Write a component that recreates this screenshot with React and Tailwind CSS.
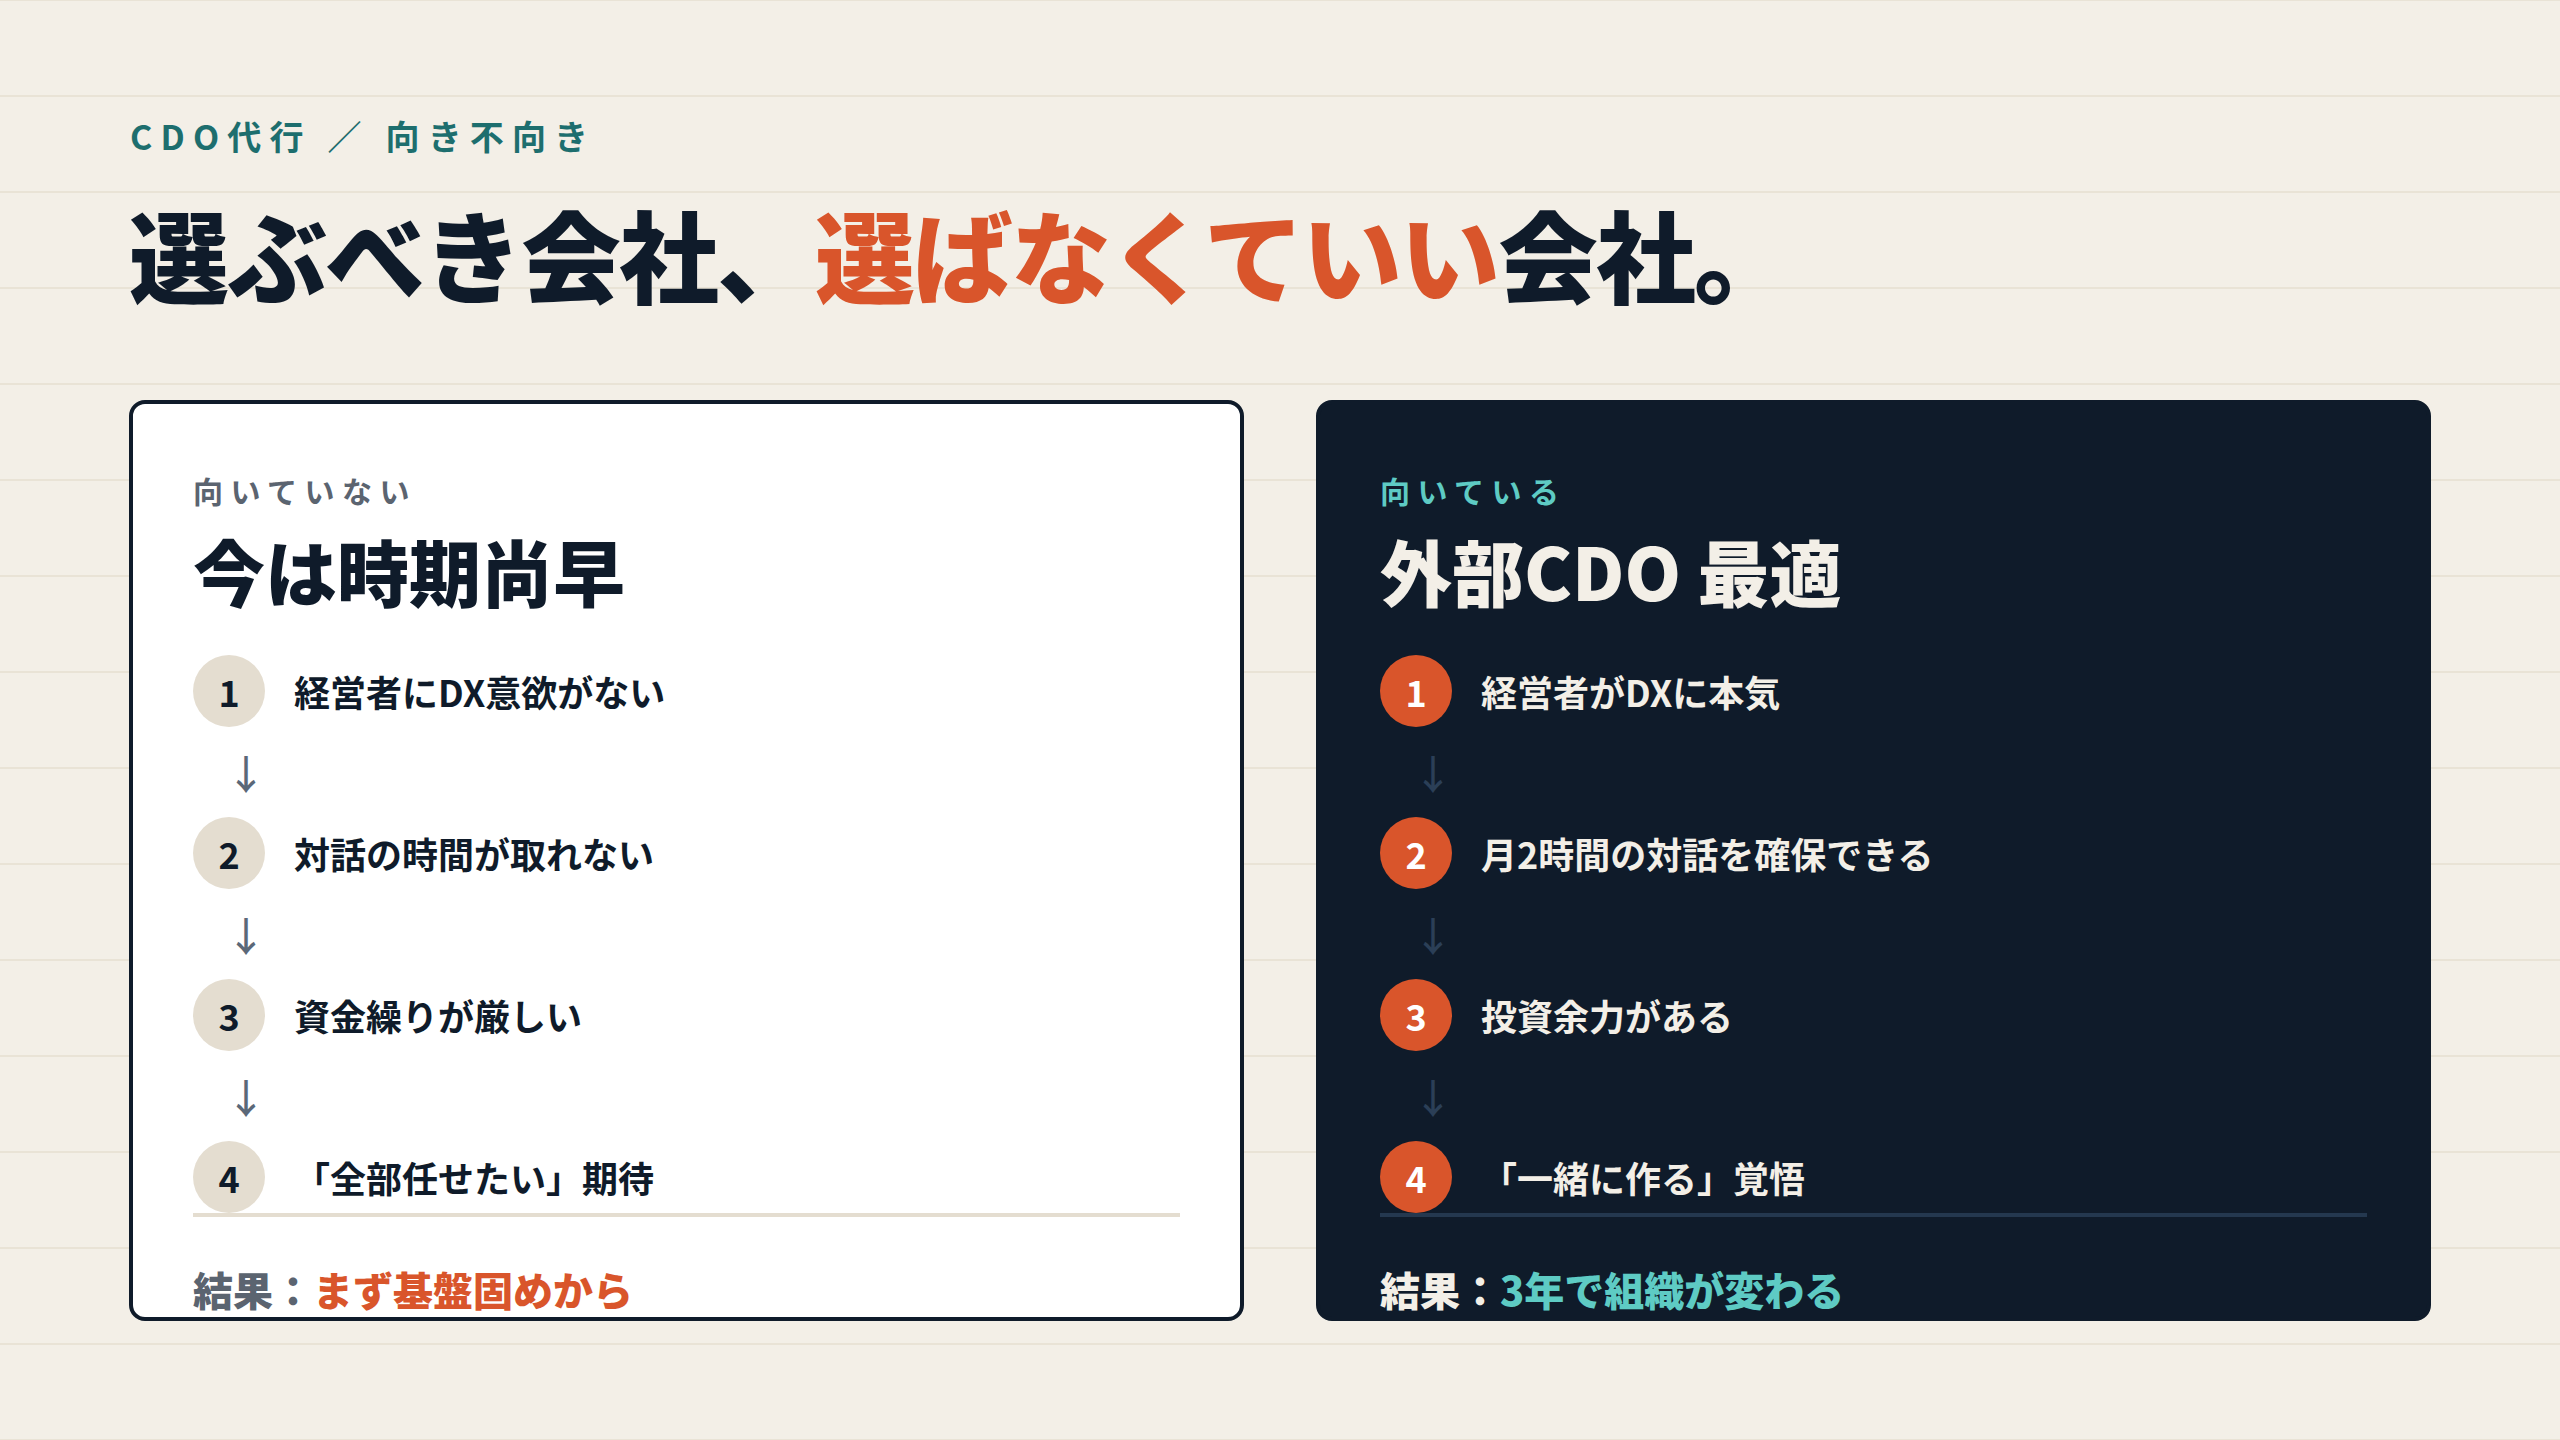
import React from "react";

const leftItems = ["経営者にDX意欲がない", "対話の時間が取れない", "資金繰りが厳しい", "「全部任せたい」期待"];
const rightItems = ["経営者がDXに本気", "月2時間の対話を確保できる", "投資余力がある", "「一緒に作る」覚悟"];

function Steps({ items, dark }) {
  return (
    <div className="mt-[42px] flex flex-col">
      {items.map((text, i) => (
        <React.Fragment key={i}>
          <div className="flex h-[72px] items-center gap-[29px]">
            <div
              className={
                dark
                  ? "flex h-[72px] w-[72px] shrink-0 items-center justify-center rounded-full bg-[#d9552b] text-[36px] font-bold text-white"
                  : "flex h-[72px] w-[72px] shrink-0 items-center justify-center rounded-full bg-[#e4ddd0] text-[36px] font-bold text-[#0f1b2a]"
              }
            >
              {i + 1}
            </div>
            <span
              className={
                dark
                  ? "text-[36px] font-bold leading-none text-[#f3efe7]"
                  : "text-[36px] font-bold leading-none text-[#0f1b2a]"
              }
            >
              {text}
            </span>
          </div>
          {i < items.length - 1 && (
            <div className="flex h-[90px] items-center">
              <span
                className={
                  dark
                    ? "ml-[33px] text-[40px] font-medium leading-none text-[#2b3f57]"
                    : "ml-[33px] text-[40px] font-medium leading-none text-[#5b6878]"
                }
              >
                ↓
              </span>
            </div>
          )}
        </React.Fragment>
      ))}
      <div className={dark ? "h-[4px] w-full bg-[#24384f]" : "h-[4px] w-full bg-[#e4ddd0]"}></div>
    </div>
  );
}

export default function App() {
  return (
    <div className="min-h-screen w-full bg-[#f3efe7] bg-[image:repeating-linear-gradient(to_bottom,#e9e3d6_0px,#e9e3d6_1px,transparent_1px,transparent_95px,#e9e3d6_95px,#e9e3d6_96px)] font-['Noto_Sans_CJK_JP','Noto_Sans',sans-serif]">
      <div className="px-[129px] pt-[116px]">
        {/* eyebrow */}
        <div className="pl-px text-[34px] font-bold leading-[40px] tracking-[0.24em] text-[#1d6e6e]">
          CDO代行 ／ 向き不向き
        </div>

        {/* title */}
        <h1 className="mt-[37px] text-[100px] font-black leading-[120px] tracking-[-0.02em] text-[#0f1b2a]">
          選ぶべき会社、<span className="text-[#d9552b]">選ばなくていい</span>会社。
        </h1>

        <div className="mt-[87px] grid grid-cols-2 gap-[72px]">
          {/* not suited */}
          <div className="rounded-[16px] border-4 border-[#0f1b2a] bg-white px-[60px] pt-[68px] pb-[4px]">
            <div className="text-[30px] font-bold leading-[36px] tracking-[0.25em] text-[#5b6470]">
              向いていない
            </div>
            <h2 className="mt-[19px] text-[72px] font-black leading-[86px] text-[#0f1b2a]">今は時期尚早</h2>
            <Steps items={leftItems} />
            <div className="mt-[48px] text-[40px] font-black leading-[48px] text-[#5b6470]">
              結果：<span className="text-[#d9552b]">まず基盤固めから</span>
            </div>
          </div>

          {/* suited */}
          <div className="rounded-[16px] border-4 border-[#0f1b2a] bg-[#0f1b2a] px-[60px] pt-[68px] pb-[4px]">
            <div className="text-[30px] font-bold leading-[36px] tracking-[0.25em] text-[#5ecbc4]">
              向いている
            </div>
            <h2 className="mt-[19px] text-[72px] font-black leading-[86px] text-[#f3efe7]">外部CDO 最適</h2>
            <Steps items={rightItems} dark />
            <div className="mt-[48px] text-[40px] font-black leading-[48px] text-[#f3efe7]">
              結果：<span className="text-[#5ecbc4]">3年で組織が変わる</span>
            </div>
          </div>
        </div>
      </div>
    </div>
  );
}
